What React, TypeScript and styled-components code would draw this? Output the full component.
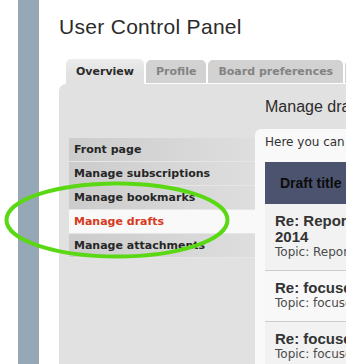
import React from "react";
import styled, { createGlobalStyle } from "styled-components";

const GlobalStyle = createGlobalStyle`
  html, body {
    margin: 0;
    padding: 0;
    background: #ffffff;
    overflow: hidden;
  }
  body {
    font-family: "DejaVu Sans", Verdana, sans-serif;
    color: #333333;
  }
`;

const tabs = [
  { label: "Overview", active: true },
  { label: "Profile", active: false },
  { label: "Board preferences", active: false },
  { label: "Private messages", active: false },
];

const menu = [
  { label: "Front page", active: false },
  { label: "Manage subscriptions", active: false },
  { label: "Manage bookmarks", active: false },
  { label: "Manage drafts", active: true },
  { label: "Manage attachments", active: false },
];

const drafts = [
  {
    id: 1,
    title: ["Re: Reported posts since the upgrade in May", "2014"],
    topic: "Reported posts since the upgrade in May 2014",
  },
  { id: 2, title: ["Re: focused search results"], topic: "focused search results" },
  { id: 3, title: ["Re: focused search results"], topic: "focused search results" },
];

function App() {
  return (
    <>
      <GlobalStyle />
      <Page>
        <SideStrip />
        <Main>
          <Title>User Control Panel</Title>
          <TabList>
            {tabs.map((tab) => (
              <Tab key={tab.label} $active={tab.active}>
                {tab.label}
              </Tab>
            ))}
          </TabList>
          <Panel>
            <Menu>
              {menu.map((item) => (
                <MenuItem key={item.label} $active={item.active}>
                  {item.label}
                </MenuItem>
              ))}
            </Menu>
            <Content>
              <Heading>Manage drafts</Heading>
              <ContentBox>
                <Intro>
                  Here you can view, edit and delete drafts you have saved.
                </Intro>
                <DraftTable>
                  <HeaderRow>Draft title</HeaderRow>
                  {drafts.map((draft, index) => (
                    <DraftRow key={draft.id} $alt={index % 2 === 1}>
                      <DraftTitle>
                        {draft.title.map((line) => (
                          <div key={line}>{line}</div>
                        ))}
                      </DraftTitle>
                      <DraftTopic>Topic: {draft.topic}</DraftTopic>
                    </DraftRow>
                  ))}
                </DraftTable>
              </ContentBox>
            </Content>
          </Panel>
        </Main>
        <Highlight width="226" height="78" viewBox="0 0 226 78">
          <ellipse
            cx="113"
            cy="39"
            rx="110.5"
            ry="36.5"
            fill="none"
            stroke="#5ad814"
            strokeWidth="4"
          />
        </Highlight>
      </Page>
    </>
  );
}

export default App;

const Page = styled.div`
  position: relative;
  display: flex;
  min-height: 100vh;
  width: 1000px;
`;

const SideStrip = styled.div`
  margin-left: 18px;
  width: 21px;
  background: #96a7b5;
  flex-shrink: 0;
`;

const Main = styled.div`
  margin-left: 20px;
  display: flex;
  flex-direction: column;
  flex: 1;
`;

const Title = styled.h1`
  margin: 14px 0 0 0;
  font-family: "Liberation Sans", Arial, sans-serif;
  font-weight: normal;
  font-size: 21px;
  line-height: 25px;
  letter-spacing: 0.3px;
  color: #2b2b2b;
`;

const TabList = styled.div`
  display: flex;
  align-items: flex-start;
  gap: 2px;
  margin: 20px 0 0 7px;
`;

const Tab = styled.div<{ $active: boolean }>`
  box-sizing: border-box;
  height: ${(p) => (p.$active ? "25px" : "23px")};
  margin-top: ${(p) => (p.$active ? "0" : "1px")};
  padding: ${(p) => (p.$active ? "6px" : "5px")} 10px 0 10px;
  border-radius: 5px 5px 0 0;
  font-size: 11px;
  font-weight: bold;
  line-height: 13px;
  white-space: nowrap;
  color: ${(p) => (p.$active ? "#2a2a2a" : "#838383")};
  background: ${(p) =>
    p.$active
      ? "linear-gradient(to bottom, #ececec, #e1e1e1 60%)"
      : "#d2d2d2"};
`;

const Panel = styled.div`
  display: flex;
  align-items: flex-start;
  background: #e1e1e1;
  border-radius: 7px 0 0 0;
  padding: 13px 0 0 10px;
  flex: 1;
`;

const Menu = styled.ul`
  list-style: none;
  margin: 41px 0 0 0;
  padding: 0;
  width: 186px;
  flex-shrink: 0;
`;

const MenuItem = styled.li<{ $active: boolean }>`
  height: 24px;
  box-sizing: border-box;
  padding: 5px 5px;
  border-bottom: 1px solid #e6e6e6;
  font-size: 11px;
  font-weight: bold;
  line-height: 13px;
  white-space: nowrap;
  color: ${(p) => (p.$active ? "#d6391c" : "#262626")};
  background: ${(p) =>
    p.$active
      ? "#f9f9f9"
      : "linear-gradient(to right, #cccccc, #dedede)"};
`;

const Content = styled.div`
  display: flex;
  flex-direction: column;
  flex: 1;
`;

const Heading = styled.h2`
  margin: 0 0 12px 10px;
  font-family: "Liberation Sans", Arial, sans-serif;
  font-weight: normal;
  font-size: 16px;
  line-height: 20px;
  color: #2b2b2b;
`;

const ContentBox = styled.div`
  background: #f9f9f9;
  border-radius: 6px 0 0 0;
  padding: 5px 10px 10px 10px;
  min-height: 260px;
`;

const Intro = styled.p`
  margin: 0;
  font-size: 12px;
  line-height: 17px;
  white-space: nowrap;
  color: #333333;
`;

const DraftTable = styled.div`
  margin-top: 11px;
`;

const HeaderRow = styled.div`
  height: 42px;
  box-sizing: border-box;
  padding: 0 15px;
  display: flex;
  align-items: center;
  background: #4b536e;
  font-family: "Liberation Sans", Arial, sans-serif;
  font-weight: bold;
  font-size: 14px;
  color: #0c0c0c;
`;

const DraftRow = styled.div<{ $alt: boolean }>`
  padding: 9px 10px 10px 10px;
  border-bottom: 1px solid #cdcdcd;
  background: ${(p) => (p.$alt ? "#f8f8f8" : "#f2f2f2")};
`;

const DraftTitle = styled.div`
  font-family: "Liberation Sans", Arial, sans-serif;
  font-weight: bold;
  font-size: 15px;
  line-height: 16px;
  color: #333333;
  white-space: nowrap;
`;

const DraftTopic = styled.div`
  font-size: 12px;
  line-height: 15px;
  color: #4a4a4a;
  white-space: nowrap;
`;

const Highlight = styled.svg`
  position: absolute;
  left: 4px;
  top: 181px;
  pointer-events: none;
`;
